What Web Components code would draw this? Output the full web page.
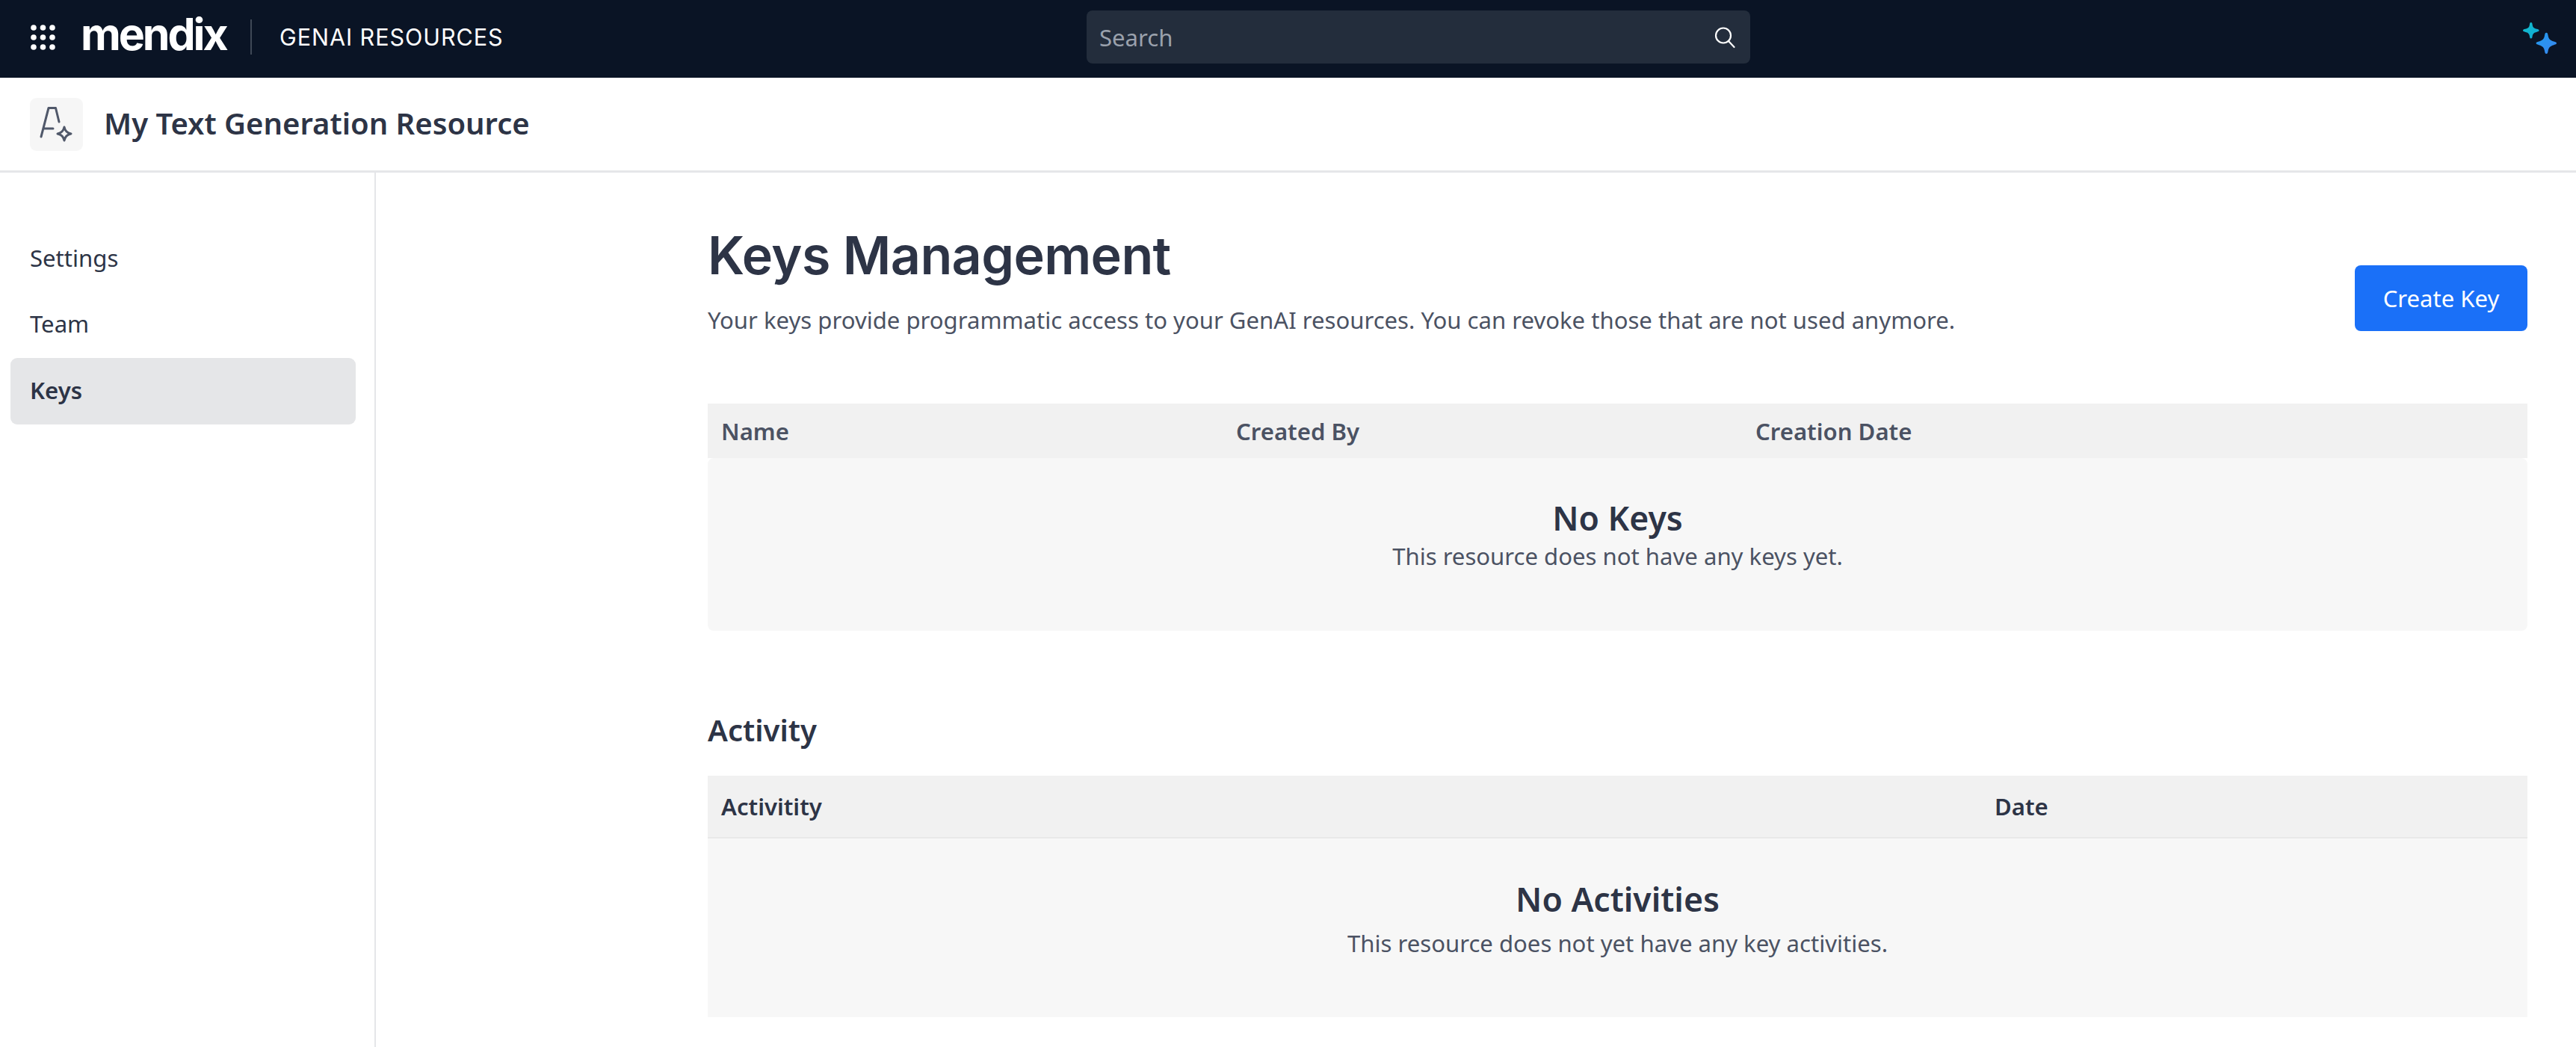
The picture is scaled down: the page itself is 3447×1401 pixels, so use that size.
<!DOCTYPE html>
<html lang="en">
<head>
<meta charset="utf-8">
<title>Keys Management</title>
<style>
html,body{margin:0;padding:0;background:#fff;height:100%;overflow:hidden}
body{font-family:"Noto Sans","Open Sans",sans-serif;color:#2d3446}
[slot="nav"]{padding-top:71px}
</style>
</head>
<body>
<gen-app>
  <top-bar></top-bar>
  <resource-header>My Text Generation Resource</resource-header>
  <div slot="nav">
    <nav-item>Settings</nav-item>
    <nav-item>Team</nav-item>
    <nav-item active>Keys</nav-item>
  </div>
  <page-head slot="main" heading="Keys Management" text="Your keys provide programmatic access to your GenAI resources. You can revoke those that are not used anymore."><primary-button>Create Key</primary-button></page-head>
  <data-table slot="main" class="keys" columns="689px 695px 1fr" heads="Name|Created By|Creation Date" title-text="No Keys" sub="This resource does not have any keys yet."></data-table>
  <section-title slot="main">Activity</section-title>
  <data-table slot="main" class="activity" columns="1704px 1fr" heads="Activitity|Date" title-text="No Activities" sub="This resource does not yet have any key activities."></data-table>
</gen-app>
<script>
function define(name, html, init){
  customElements.define(name, class extends HTMLElement{
    constructor(){
      super();
      this.attachShadow({mode:'open'}).innerHTML = html;
    }
    connectedCallback(){ if(init) init(this, this.shadowRoot); }
  });
}

define('gen-app', `<style>
:host{display:flex;flex-direction:column;height:1401px;overflow:hidden}
.body{flex:1;display:flex;min-height:0}
aside{flex:0 0 auto;width:501px;box-sizing:content-box;border-right:2px solid #e5e6e9}
main{flex:1;min-width:0;padding:71px 65px 0 444px;box-sizing:border-box}
</style>
<slot></slot>
<div class="body"><aside><slot name="nav"></slot></aside><main><slot name="main"></slot></main></div>`);

define('top-bar', `<style>
:host{display:flex;align-items:center;height:104px;background:#0a1425;color:#fff;flex:none}
.brand{flex:0 0 1454px;display:flex;align-items:center;box-sizing:border-box;padding-left:41px}
.dots{display:block;width:33px;height:34px;flex:none;margin-top:-4px}
.logo{font:700 59px/60px Inter,sans-serif;letter-spacing:-3.1px;margin-left:34px;width:195px;margin-top:-12px;white-space:nowrap}
.sep{width:2px;height:47px;background:#3f4856;margin-left:32px;margin-top:-5px}
.app{font:400 30.5px/40px Inter,sans-serif;margin-left:37px;white-space:nowrap;letter-spacing:.95px;margin-top:-4px}
.search{width:888px;height:71px;background:#232d3c;border-radius:8px;display:flex;align-items:center;justify-content:space-between;padding:0 19px 0 17px;box-sizing:border-box;margin-top:-5px}
.search span{font:400 31.1px/40px "Noto Sans",sans-serif;color:#9aa1ac}
.search svg{width:30px;height:30px;display:block}
.spark{margin-left:auto;margin-right:24px;width:47px;height:43px;display:block;margin-top:-2px}
</style>
<div class="brand">
  <svg class="dots" viewBox="0 0 33 34" fill="#fff"><circle cx="4" cy="4" r="3.8"/><circle cx="16.5" cy="4" r="3.8"/><circle cx="29" cy="4" r="3.8"/><circle cx="4" cy="17" r="3.8"/><circle cx="16.5" cy="17" r="3.8"/><circle cx="29" cy="17" r="3.8"/><circle cx="4" cy="30" r="3.8"/><circle cx="16.5" cy="30" r="3.8"/><circle cx="29" cy="30" r="3.8"/></svg>
  <span class="logo">mendix</span>
  <span class="sep"></span>
  <span class="app">GENAI RESOURCES</span>
</div>
<div class="search"><span>Search</span>
  <svg viewBox="0 0 30 30" fill="none" stroke="#fff" stroke-width="2.2"><circle cx="13" cy="12.5" r="10"/><path d="M20 20l7.5 8" stroke-linecap="round"/></svg>
</div>
<svg class="spark" viewBox="0 0 48 44">
  <defs><linearGradient id="g1" x1="0" y1="0" x2="1" y2="1"><stop offset="0" stop-color="#12bdc9"/><stop offset="1" stop-color="#10a9d8"/></linearGradient>
  <linearGradient id="g2" x1="0" y1="0" x2="1" y2="1"><stop offset="0" stop-color="#1f9bee"/><stop offset="1" stop-color="#3b86ee"/></linearGradient></defs>
  <path fill="url(#g1)" d="M11 0c1.5 0 1.6 1 2 3.500c.5 3 2 4.500 6 5.500c2 .5 3 .8 3 2s-1 1.500-3 2c-4 1-5.500 2.500-6 5.500c-.4 2.500-.5 3.500-2 3.500s-1.600-1-2-3.500c-.5-3-2-4.500-6-5.500c-2-.5-3-.8-3-2s1-1.500 3-2c4-1 5.500-2.500 6-5.500c.4-2.500.5-3.500 2-3.500z"/>
  <path fill="url(#g2)" d="M32 14c1.700 0 1.900 1.300 2.400 4.200c.7 4.300 2.800 6.500 7.800 7.900c2.600.7 3.800 1.100 3.800 2.400s-1.200 1.700-3.800 2.400c-5 1.400-7.100 3.600-7.800 7.900c-.5 2.900-.7 4.200-2.400 4.200s-1.900-1.300-2.400-4.200c-.7-4.300-2.800-6.500-7.800-7.900c-2.600-.7-3.800-1.100-3.800-2.400s1.200-1.700 3.800-2.400c5-1.400 7.100-3.600 7.800-7.900c.5-2.900.7-4.200 2.400-4.200z"/>
</svg>`);

define('resource-header', `<style>
:host{display:flex;align-items:center;height:124px;box-sizing:content-box;border-bottom:3px solid #e5e6e9;padding-left:40px;flex:none}
.ico{width:71px;height:71px;border-radius:9px;background:#f6f6f6;flex:none;display:block}
.t{font:600 40px/56px "Noto Sans",sans-serif;color:#2d3446;margin-left:28px;margin-top:-2px}
</style>
<svg class="ico" viewBox="0 0 71 71" fill="none" stroke="#50586a" stroke-width="3" stroke-linecap="round" stroke-linejoin="round">
  <path d="M15 52L25 13.500H34.500L39 32M19 41H31"/>
  <path d="M46 39Q47.500 46.500 55 48Q47.500 49.500 46 57Q44.500 49.500 37 48Q44.500 46.500 46 39Z"/>
</svg>
<span class="t"><slot></slot></span>`);

define('nav-item', `<style>
:host{display:flex;align-items:center;height:88.67px;box-sizing:border-box;margin:0 25px 0 14px;padding:0 0 3px 26px;border-radius:9px;font:400 31.1px/44px "Noto Sans",sans-serif;color:#2d3446}
:host([active]){background:#e5e6e8;font-weight:600}
</style><slot></slot>`);

define('page-head', `<style>
:host{display:flex;justify-content:space-between;align-items:flex-start}
h1{margin:0;font:600 70px/80px Inter,sans-serif;letter-spacing:-.6px;color:#2d3446}
p{margin:24px 0 0;font:400 31.1px/44px "Noto Sans",sans-serif;color:#4b5263;white-space:nowrap}
.act{margin-top:53px}
</style>
<div><h1 id="h"></h1><p id="p"></p></div>
<div class="act"><slot></slot></div>`, (el, s)=>{
  s.getElementById('h').textContent = el.getAttribute('heading');
  s.getElementById('p').textContent = el.getAttribute('text');
});

define('primary-button', `<style>
:host{display:flex;align-items:center;justify-content:center;width:231px;height:88px;background:#1a70f8;color:#fff;border-radius:8px;font:400 31.1px/44px "Noto Sans",sans-serif}
</style><slot></slot>`);

define('section-title', `<style>
:host{display:block;margin:111px 0 39px;font:600 40px/44px "Noto Sans",sans-serif;color:#2d3446}
</style><slot></slot>`);

define('data-table', `<style>
:host{display:block;margin-top:90px}
:host(.activity){margin-top:0}
.head{display:grid;height:73px;align-items:center;padding-left:18px;background:#f1f1f1;font:600 31.1px/44px "Noto Sans",sans-serif;color:#4b5263}
:host(.activity) .head{height:82px;border-bottom:2px solid #e8e8e8;color:#2d3446}
.empty{display:flex;flex-direction:column;align-items:center;height:231px;box-sizing:border-box;padding-top:56px;background:#f7f7f7;border-radius:8px}
:host(.activity) .empty{height:239px;padding-top:57px;border-radius:0}
.tt{font:600 44.5px/48px "Noto Sans",sans-serif;color:#2d3446}
.ss{font:400 31.1px/44px "Noto Sans",sans-serif;color:#4b5263;margin-top:5px}
:host(.activity) .ss{margin-top:13px}
</style>
<div class="head" id="head"></div>
<div class="empty"><div class="tt" id="tt"></div><div class="ss" id="ss"></div></div>`, (el, s)=>{
  const head = s.getElementById('head');
  head.style.gridTemplateColumns = el.getAttribute('columns');
  el.getAttribute('heads').split('|').forEach(t=>{const d=document.createElement('div');d.textContent=t;head.appendChild(d);});
  s.getElementById('tt').textContent = el.getAttribute('title-text');
  s.getElementById('ss').textContent = el.getAttribute('sub');
});
</script>
</body>
</html>
